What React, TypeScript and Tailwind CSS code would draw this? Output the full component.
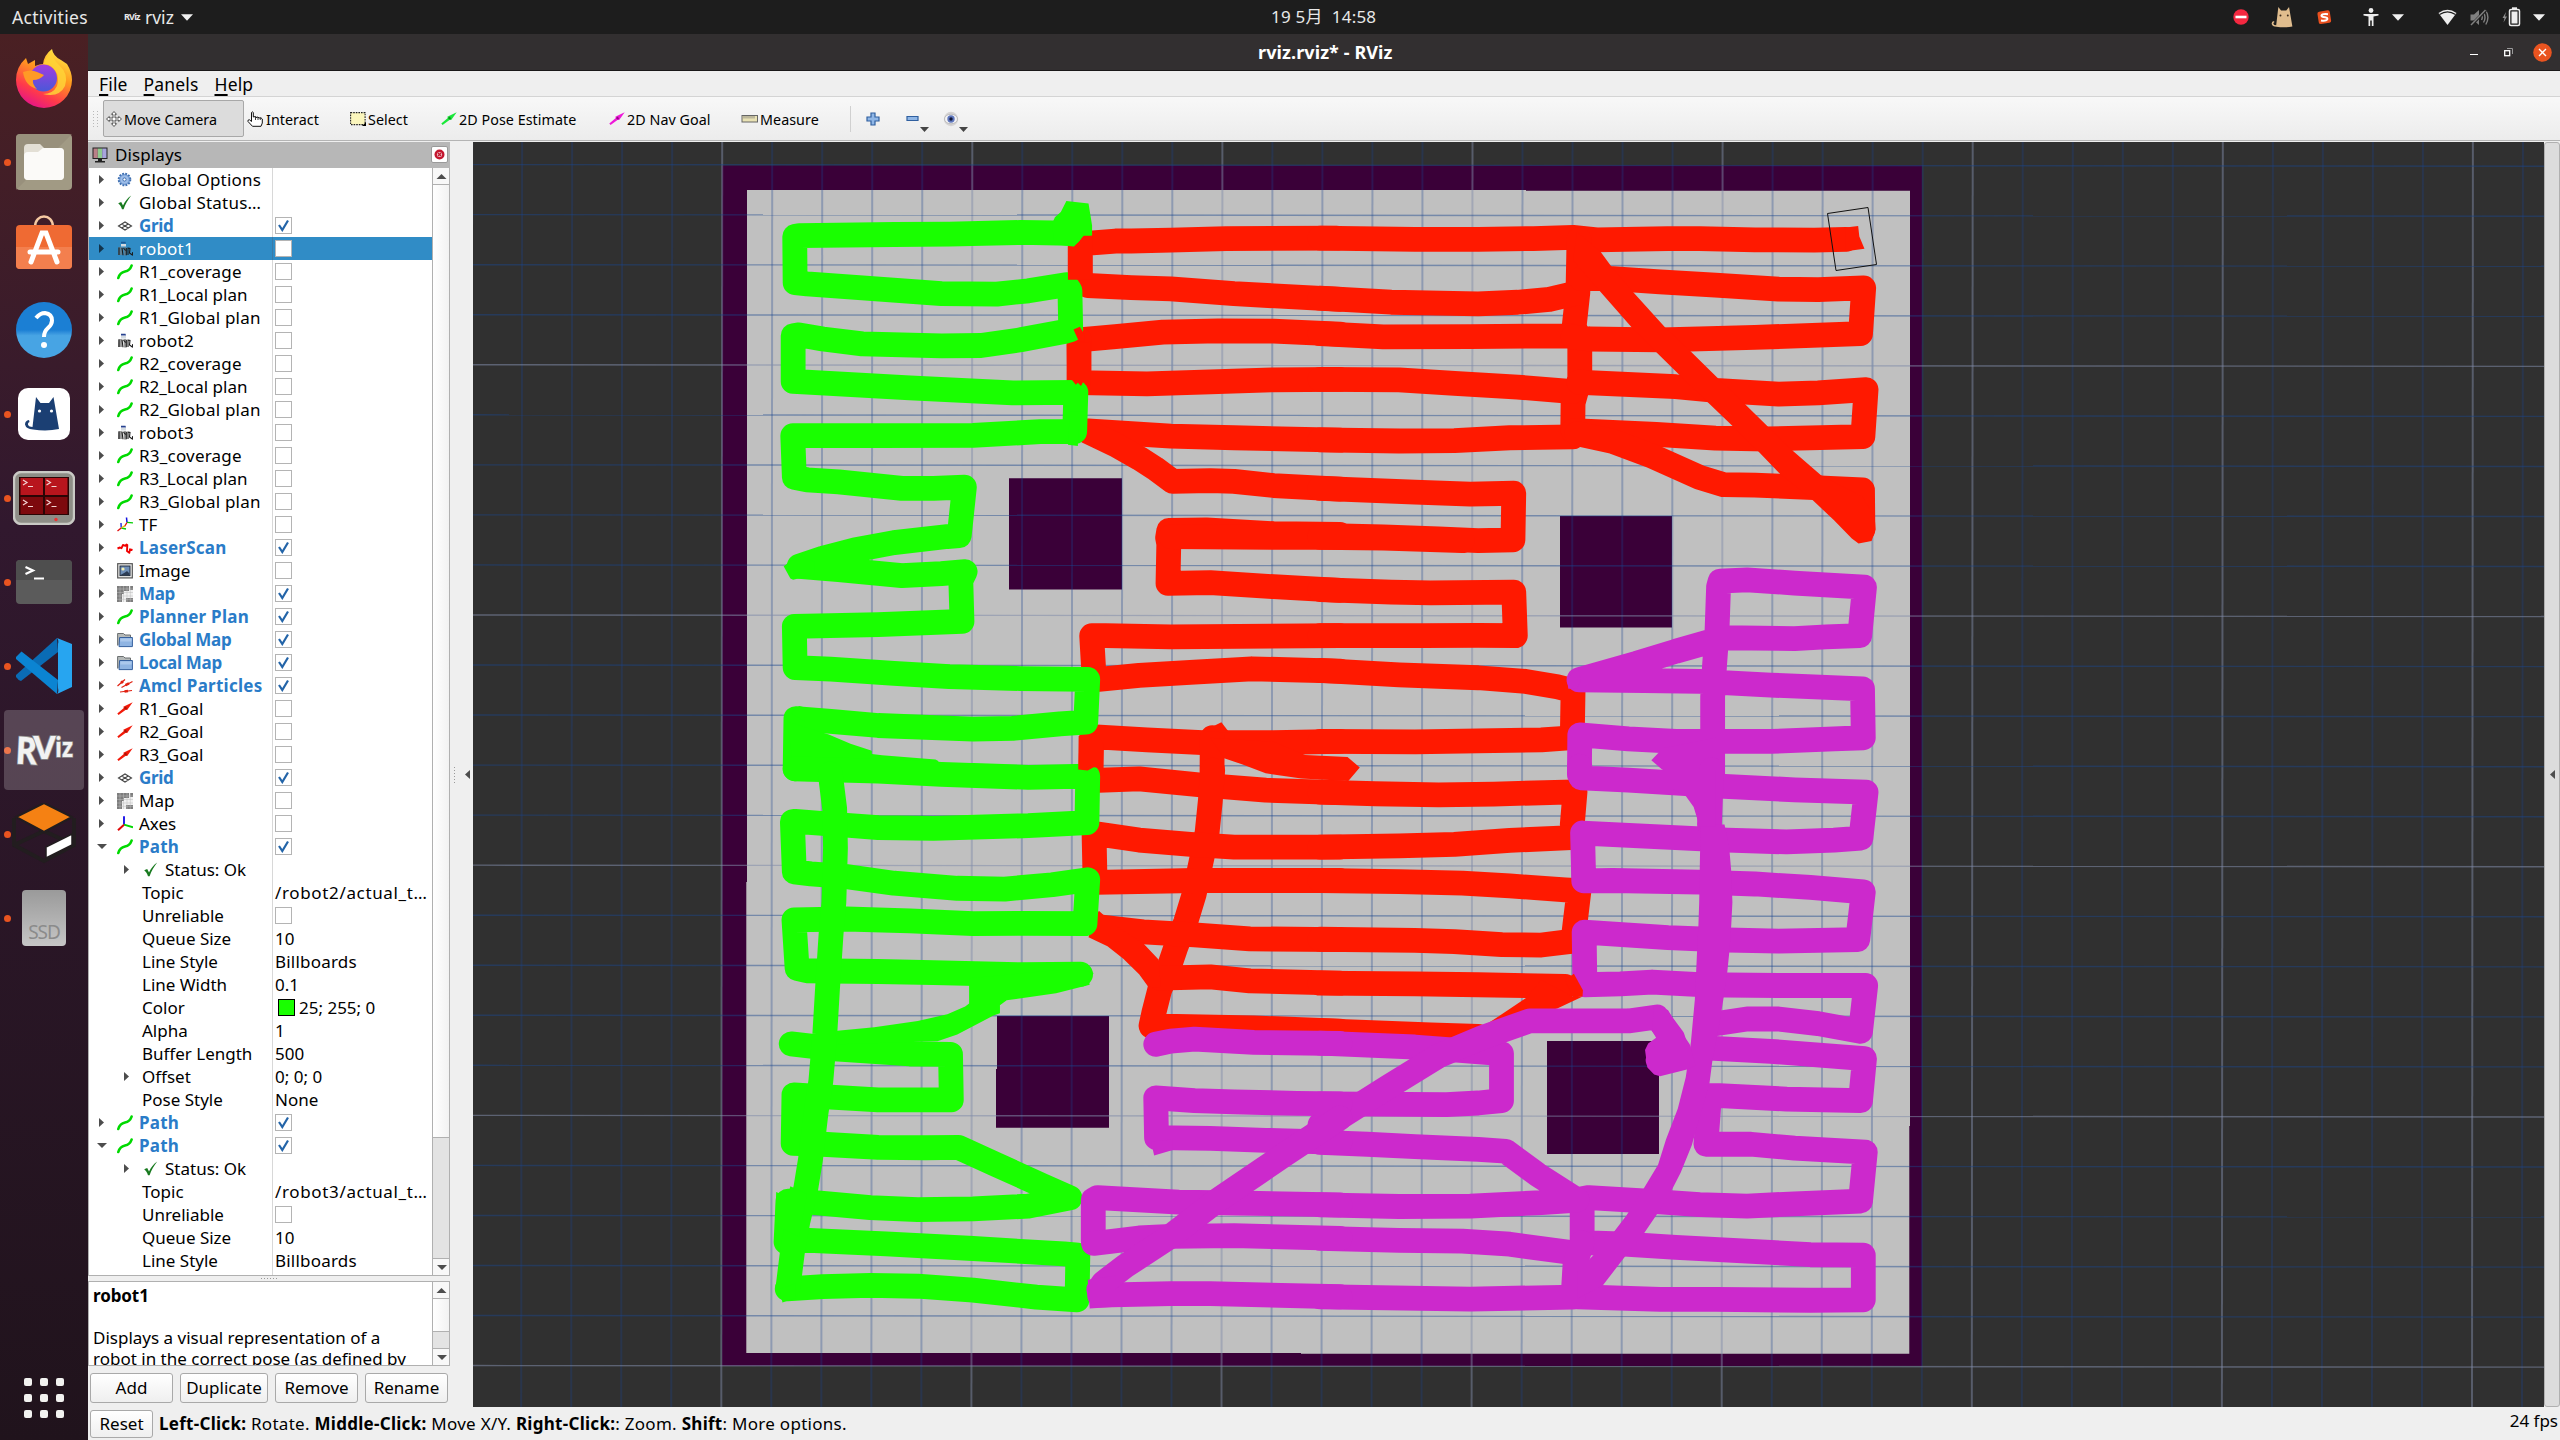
import React from "react";

const FONT = "font-['Noto_Sans','Noto_Sans_CJK_SC',sans-serif]";

/* ---------- small shared glyphs ---------- */

function Caret({ className = "text-[#4d4d4d]", dir = "right" }: { className?: string; dir?: "right" | "down" | "up" | "left" }) {
  const d = {
    right: "M3 1 L8 5.5 L3 10Z",
    down: "M1 3 H11 L6 8Z",
    up: "M0.5 8 H10.5 L5.5 3Z",
    left: "M7 1 L2 5.5 L7 10Z",
  }[dir];
  return (
    <svg width="11" height="11" viewBox="0 0 11 11" className={className}>
      <path d={d} fill="currentColor" />
    </svg>
  );
}

function TreeIcon({ name, selected }: { name: string; selected?: boolean }) {
  const p = { width: 16, height: 16, viewBox: "0 0 16 16", className: "shrink-0" };
  switch (name) {
    case "gear":
      return (
        <svg {...p}>
          <circle cx="7.5" cy="7.5" r="5.8" fill="#8db2e3" stroke="#3f6fb0" strokeWidth="2" strokeDasharray="1.8 1.24" />
          <circle cx="7.5" cy="7.5" r="4.6" fill="#9dbde8" stroke="#6f97cf" strokeWidth="0.8" />
          <circle cx="7.5" cy="7.5" r="1.6" fill="#fff" stroke="#3f6fb0" strokeWidth="1" />
        </svg>
      );
    case "ok":
      return (
        <svg {...p}>
          <path d="M1.2 8.3 L4.2 7 L6 10.5 C8 6.5 10.5 3.2 14.2 0.6 C11 5 8.3 9.3 6.6 14.2 H5 C4.1 11.5 3 9.8 1.2 8.3Z" fill="#187a1f" />
        </svg>
      );
    case "grid":
      return (
        <svg {...p}>
          <path d="M1.5 8 L8 4 L14.5 8 L8 12Z M4.7 6 L11.2 10 M11.2 6 L4.7 10" fill="none" stroke="#444" strokeWidth="1.1" />
        </svg>
      );
    case "robot":
      return (
        <svg {...p}>
          <path d="M4 0.8 H8.5 L9 2.5 H4Z" fill={selected ? "#1c5a96" : "#26418f"} />
          <path d="M4 3 H9 V5.5 H4Z" fill="#d5dbe0" />
          <path d="M1.5 6 H5.5 V14 H1Z M6.5 6 H9.5 L9 14.5 H7Z" fill={selected ? "#5c7f96" : "#9a9a9a"} />
          <path d="M2 6.5 V14 M5 7 L6 14.3 M9.3 7 V14.3 M6.5 7 L8.5 9.5 M11 6.5 V14 M11 7 L13 7.5 L12.5 12 L15.3 14 L15.8 11" fill="none" stroke="#1a1a1a" strokeWidth="1.1" />
        </svg>
      );
    case "path":
      return (
        <svg {...p}>
          <path d="M1.3 14 C2.6 9.6 4.6 8.3 8 7.6 C12 6.8 13.4 5 14.6 1.6" fill="none" stroke="#00d900" strokeWidth="2.6" strokeLinecap="round" />
        </svg>
      );
    case "tf":
      return (
        <svg {...p}>
          <path d="M4.2 10.5 L4 6" stroke="#1010e0" strokeWidth="1.3" />
          <path d="M10 5.5 L9.5 0.5" stroke="#1010e0" strokeWidth="1.5" />
          <path d="M10 5.3 L16 5.8 M4.5 11 L9 12" stroke="#00d000" strokeWidth="1.3" />
          <path d="M0.5 14 L4.5 10.8 M7.5 9.5 L10 5.5" stroke="#e01010" strokeWidth="1.4" />
          <path d="M4.5 10.8 L8 8.6" stroke="#e8c000" strokeWidth="1.2" />
        </svg>
      );
    case "laser":
      return (
        <svg {...p}>
          <path d="M0.5 8.5 L3 7.5 L4.5 8.2 L6 5 L8.5 5.8 L9.5 4.5 L10.3 5 L10 11 L12.3 12.8 L13 9.3 L15.5 10" fill="none" stroke="#f00000" strokeWidth="1.9" strokeLinejoin="round" />
        </svg>
      );
    case "image":
      return (
        <svg {...p}>
          <rect x="0.7" y="0.7" width="14.6" height="14.2" fill="#f2f2f0" stroke="#555" strokeWidth="1.2" />
          <rect x="3" y="3" width="10" height="9.6" fill="#6f8fb8" stroke="#222c3c" />
          <circle cx="6" cy="6" r="1.6" fill="#f6f0b0" />
          <path d="M3.5 12 L8 9.5 L10 8 L12.5 10.5 V12Z" fill="#2c3c55" />
        </svg>
      );
    case "map":
      return (
        <svg {...p}>
          <rect width="16" height="16" fill="#f1f1f1" />
          <path d="M0 0 H12 V5 H7 V8 H5 V16 H0Z M13 0 H16 V4 H13Z M9 12 H16 V16 H9Z" fill="#7d7d7d" />
          <path d="M3 0 V16 M6.5 0 V16 M10 0 V16 M13.3 0 V16 M0 3 H16 M0 6.5 H16 M0 10 H16 M0 13.3 H16" stroke="#bdbdbd" strokeWidth="0.5" />
        </svg>
      );
    case "folder":
      return (
        <svg {...p}>
          <path d="M0.6 13.5 V1.5 H6.5 L8 3 H13.5 V6" fill="#b5b9b8" stroke="#6b6f70" />
          <path d="M2.6 5.5 H15.4 V14.6 H2Z" fill="#8fb4e2" stroke="#35609e" />
          <path d="M3.4 6.5 H14.6 V9.5 H3.2Z" fill="#abc8ec" />
        </svg>
      );
    case "amcl":
      return (
        <svg {...p}>
          <g stroke="#e02010" strokeWidth="1.2">
            <path d="M0.5 8 L8 1.5 M4.5 9.5 L15.5 3.5 M3 14 L15 12.5" />
            <path d="M4 5 L6 3.2 M8.5 7.2 L12 5.4 M7.5 13.5 L11 13" strokeWidth="2.6" />
          </g>
        </svg>
      );
    case "goal":
      return <ArrowIcon color="#f21a0a" dark="#a81408" />;
    case "axes":
      return (
        <svg {...p}>
          <path d="M7 8.7 V0.3" stroke="#1a12e8" strokeWidth="1.9" />
          <path d="M7 8.7 L16 11.3" stroke="#00d800" strokeWidth="1.9" />
          <path d="M7 8.7 L1 14.3" stroke="#e00808" strokeWidth="2" />
        </svg>
      );
    default:
      return null;
  }
}

function ArrowIcon({ color, dark }: { color: string; dark: string }) {
  return (
    <svg width="16" height="16" viewBox="0 0 16 16" className="shrink-0">
      <path d="M0.3 12.4 L6.8 7 L6.3 5.8 L15.7 1.2 L10.2 9 L8.8 8.8 L1.6 14Z" fill={color} />
      <path d="M6.8 7 L9 5.5 L10 8 L8.8 8.8Z" fill={dark} />
    </svg>
  );
}

/* ---------- displays tree ---------- */

type Row = { t: string; icon?: string; on?: boolean; off?: boolean; v?: string; lvl?: number; open?: boolean; leaf?: boolean; sel?: boolean; sw?: boolean; wide?: boolean };

const trio = (n: number): Row[] => [
  { t: `robot${n}`, icon: "robot", off: true, sel: n === 1, wide: true },
  { t: `R${n}_coverage`, icon: "path", off: true, wide: true },
  { t: `R${n}_Local plan`, icon: "path", off: true },
  { t: `R${n}_Global plan`, icon: "path", off: true, wide: true },
];

const prop = (t: string, v: string): Row => ({ t, v, lvl: 1, leaf: true });

const ROWS: Row[] = [
  { t: "Global Options", icon: "gear", wide: true },
  { t: "Global Status…", icon: "ok", wide: true },
  { t: "Grid", icon: "grid", on: true },
  ...trio(1),
  ...trio(2),
  ...trio(3),
  { t: "TF", icon: "tf", off: true },
  { t: "LaserScan", icon: "laser", on: true, wide: true },
  { t: "Image", icon: "image", off: true },
  { t: "Map", icon: "map", on: true },
  { t: "Planner Plan", icon: "path", on: true, wide: true },
  { t: "Global Map", icon: "folder", on: true },
  { t: "Local Map", icon: "folder", on: true },
  { t: "Amcl Particles", icon: "amcl", on: true, wide: true },
  { t: "R1_Goal", icon: "goal", off: true },
  { t: "R2_Goal", icon: "goal", off: true },
  { t: "R3_Goal", icon: "goal", off: true },
  { t: "Grid", icon: "grid", on: true },
  { t: "Map", icon: "map", off: true },
  { t: "Axes", icon: "axes", off: true },
  { t: "Path", icon: "path", on: true, open: true, wide: true },
  { t: "Status: Ok", icon: "ok", lvl: 1 },
  prop("Topic", "/robot2/actual_t…"),
  { t: "Unreliable", off: true, lvl: 1, leaf: true },
  prop("Queue Size", "10"),
  prop("Line Style", "Billboards"),
  prop("Line Width", "0.1"),
  { t: "Color", v: "25; 255; 0", sw: true, lvl: 1, leaf: true },
  prop("Alpha", "1"),
  prop("Buffer Length", "500"),
  { t: "Offset", v: "0; 0; 0", lvl: 1 },
  prop("Pose Style", "None"),
  { t: "Path", icon: "path", on: true, wide: true },
  { t: "Path", icon: "path", on: true, open: true, wide: true },
  { t: "Status: Ok", icon: "ok", lvl: 1 },
  prop("Topic", "/robot3/actual_t…"),
  { t: "Unreliable", off: true, lvl: 1, leaf: true },
  prop("Queue Size", "10"),
  prop("Line Style", "Billboards"),
];

function labelStyle(r: Row) {
  if (r.on) return r.wide ? "font-bold tracking-[0.25px] text-[#2a7cc8]" : "font-bold tracking-[-0.3px] text-[#2a7cc8]";
  return r.wide ? "tracking-[0.22px]" : "";
}

function Check({ on }: { on?: boolean }) {
  return (
    <span className="flex size-[17px] shrink-0 items-center justify-center border border-[#b4b4b4] bg-white">
      {on && (
        <svg width="13" height="13" viewBox="0 0 13 13">
          <path d="M2 6 L5.3 11 L11 1.5" fill="none" stroke="#2364a8" strokeWidth="2.2" />
        </svg>
      )}
    </span>
  );
}

function TreeRow({ r }: { r: Row }) {
  return (
    <div className={`flex h-[23px] shrink-0 items-center ${r.sel ? "bg-[#308cc6] text-white" : "text-black"}`}>
      <div className={`flex h-full w-[184px] shrink-0 items-center overflow-hidden whitespace-nowrap border-r ${r.sel ? "border-[#3a7ba8]" : "border-[#d8d8d8]"} ${r.lvl ? "pl-[32px]" : "pl-[7px]"}`}>
        <span className="flex w-[11px] shrink-0">{!r.leaf && <Caret dir={r.open ? "down" : "right"} className={r.sel ? "text-[#12344c]" : "text-[#4d4d4d]"} />}</span>
        {r.icon && (
          <span className={r.lvl ? "ml-[11px] flex" : "ml-[10px] flex"}>
            <TreeIcon name={r.icon} selected={r.sel} />
          </span>
        )}
        <span className={`leading-[22px] ${r.icon ? "ml-[6px]" : "ml-[10px]"} ${labelStyle(r)}`}>{r.t}</span>
      </div>
      <div className="flex items-center whitespace-nowrap pl-[2px]">
        {(r.on || r.off) && <Check on={r.on} />}
        {r.sw && <span className="ml-[3px] mr-1 size-[17px] border border-black bg-[#19ff00]" />}
        {r.v && <span className={`leading-[22px] ${r.v.startsWith("/") ? "tracking-[0.65px]" : r.v === "Billboards" ? "tracking-[0.2px]" : ""}`}>{r.v}</span>}
      </div>
    </div>
  );
}

function ScrollBar({ thumb }: { thumb: string }) {
  return (
    <div className="flex w-[17px] shrink-0 flex-col border-l border-[#b0b0b0] bg-[#e3e3e3]">
      <div className="flex h-[17px] shrink-0 items-center justify-center border-b border-[#b0b0b0] bg-[#f8f8f8]"><Caret dir="up" /></div>
      <div className={`${thumb} shrink-0 border-b border-[#b0b0b0] bg-gradient-to-r from-white to-[#f2f2f2]`} />
      <div className="flex-1" />
      <div className="flex h-[17px] shrink-0 items-center justify-center border-t border-[#b0b0b0] bg-[#f8f8f8]"><Caret dir="down" /></div>
    </div>
  );
}

function Btn({ children, className }: { children: React.ReactNode; className: string }) {
  return (
    <div className={`flex items-center justify-center rounded-[3px] border border-[#a9a9a9] bg-gradient-to-b from-white to-[#efefef] ${className}`}>{children}</div>
  );
}

function DisplaysPanel() {
  return (
    <div className="flex w-[362px] shrink-0 flex-col">
      <div className="flex h-[26px] items-center bg-[#b7b7b7] pl-[4px] pr-[2px]">
        <svg width="16" height="16" viewBox="0 0 16 16">
          <rect x="0.5" y="0.5" width="15" height="11.5" fill="#222" />
          <path d="M1.5 1.5 H5.8 V11 H1.5Z" fill="#b98088" />
          <path d="M5.8 1.5 H10.2 V11 H5.8Z" fill="#8fca8f" />
          <path d="M10.2 1.5 H14.5 V11 H10.2Z" fill="#a7a4dc" />
          <path d="M6 12 H10 V14 H13 V15.5 H3 V14 H6Z" fill="#222" />
        </svg>
        <span className="-mt-px ml-[7px] flex-1 tracking-[0.1px]">Displays</span>
        <span className="-mt-[2px] flex size-[17px] items-center justify-center rounded-[2px] border border-[#9a9a9a] bg-white">
          <svg width="11" height="11" viewBox="0 0 11 11">
            <circle cx="5.5" cy="5.5" r="5" fill="#c4162f" />
            <circle cx="5.5" cy="5.5" r="2.6" fill="#e9b7bd" />
            <path d="M4 4 L7 7 M7 4 L4 7" stroke="#c4162f" strokeWidth="1.2" />
          </svg>
        </span>
      </div>
      <div className="flex h-[1108px] border-b border-l border-r border-[#b0b0b0] bg-white">
        <div className="flex h-[1107px] flex-1 flex-col overflow-hidden">
          {ROWS.map((r, i) => (
            <TreeRow key={i} r={r} />
          ))}
          <div className="w-[184px] flex-1 border-r border-[#d8d8d8]" />
        </div>
        <ScrollBar thumb="h-[953px]" />
      </div>
      <div className="flex h-[5px] items-center justify-center gap-[2px]">
        {[0, 1, 2, 3, 4, 5].map((i) => (
          <span key={i} className="size-px bg-[#999]" />
        ))}
      </div>
      <div className="flex h-[85px] border border-[#b0b0b0] bg-white">
        <div className="h-[83px] flex-1 overflow-hidden whitespace-nowrap pl-[4px] pt-[3px] leading-[21px]">
          <p className="font-bold tracking-[-0.1px]">robot1</p>
          <p className="mt-[21px]">Displays a visual representation of a</p>
          <p>robot in the correct pose (as defined by</p>
        </div>
        <ScrollBar thumb="h-[33px]" />
      </div>
      <div className="mt-[7px] flex h-[30px] pl-[2px]">
        <Btn className="w-[83px]">Add</Btn>
        <Btn className="ml-[7px] w-[88px]">Duplicate</Btn>
        <Btn className="ml-[7px] w-[83px]">Remove</Btn>
        <Btn className="ml-[7px] w-[83px]">Rename</Btn>
      </div>
    </div>
  );
}

/* ---------- 3D view ---------- */

const TOP_L = "translate(720 150) scale(0.39541 0.40816)";
const TOP_R = "translate(1320 150) scale(0.39541 0.40816)";
const BOT_L = "translate(720 770) scale(0.39541 0.38903)";
const BOT_R = "translate(1320 770) scale(0.39541 0.38903)";

function Trail({ at, color, lines, areas = [] }: { at: string; color: string; lines: string[]; areas?: string[] }) {
  return (
    <g transform={at}>
      {lines.map((pts, i) => (
        <polyline key={i} points={pts} fill="none" stroke={color} strokeWidth="24.8" strokeLinejoin="round" strokeLinecap="round" vectorEffect="non-scaling-stroke" />
      ))}
      {areas.map((pts, i) => (
        <polygon key={i} points={pts} fill={color} />
      ))}
    </g>
  );
}

const RED = "#ff1900";
const GREEN = "#19ff00";
const PURPLE = "#cc29cc";

function View3D() {
  const ks = Array.from({ length: 50 }, (_, i) => i);
  return (
    <svg width="2071" height="1265" viewBox="473 142 2071 1265" className="block shrink-0 bg-[#303030]">
      <path d="M722 165.5 H1922 V1366 H722Z" fill="#3a0038" />
      <path d="M747 190 H1526 V190.7 H1910 V1126 H1909.3 V1353.7 H1301 V1353 H746.3 V882 H747Z" fill="#c0c0c0" />
      <path d="M1009 478.2 H1122 V589.6 H1009Z M1560 516 H1672 V627.5 H1560Z M997 1016 H1109 V1127.7 H996 V1069 H997Z M1547 1041 H1659 V1154 H1547Z" fill="#3a0038" />

      {ks.map((k) => {
        const x = 472.1 + 50.02 * k;
        return x < 2544 ? <line key={k} x1={x} x2={x - 0.9} y1="142" y2="1407" stroke={k % 5 === 0 ? "rgba(130,140,170,0.48)" : "rgba(26,67,141,0.3)"} strokeWidth="2" /> : null;
      })}
      {ks.slice(0, 25).map((k) => {
        const y = 164.6 + 50.04 * k;
        return <line key={k} x1="473" x2="2544" y1={y} y2={y + 1.6} stroke={k % 5 === 4 ? "rgba(130,140,170,0.55)" : "rgba(26,72,141,0.45)"} strokeWidth="1.4" />;
      })}

      <Trail
        at={TOP_L}
        color={RED}
        lines={[
          "911,325 911,230 1000,223 1040,223 1140,221 1280,217 1560,216",
          "930,332 1040,337 1140,340 1300,352 1568,366",
          "908,465 1000,457 1120,446 1260,443 1400,444 1568,451",
          "908,463 908,570 1080,573 1240,568 1400,563 1568,562",
          "930,688 1040,695 1140,701 1300,705 1568,711",
          "930,690 1000,722 1060,755 1100,780 1145,812 1240,810 1300,812 1400,822 1568,831",
          "1568,942 1400,940 1230,931 1135,932 1132,950 1135,965 1133,1062 1240,1060 1400,1070 1568,1079",
          "1140,947 1400,949 1568,949",
          "1568,1190 1140,1193 975,1190 940,1190 946,1290",
          "945,1298 1060,1287 1200,1279 1345,1271 1568,1277",
          "1568,1449 1400,1452 1220,1452 1080,1445 940,1437 938,1540",
          "1245,1440 1244,1568",
        ]}
        areas={[
          "1222,1424 1268,1402 1288,1427",
          "1240,1440 1400,1450 1480,1482 1587,1487 1618,1513 1589,1546 1470,1540 1380,1527 1320,1505 1275,1490",
        ]}
      />
      <Trail
        at={TOP_R}
        color={RED}
        lines={[
          "0,216 240,219 400,219 540,217 640,214 700,220 880,217 960,217 1100,220 1250,221 1330,219",
          "655,220 653,320 652,350 643,430 657,480 657,560 640,620 639,702",
          "0,363 180,373 400,377 500,373 580,366 650,350",
          "0,450 160,458 380,457 560,456 640,456",
          "0,562 200,563 340,572 500,581 640,592",
          "0,710 200,713 340,712 480,705 640,703",
          "660,315 740,315 860,323 1000,331 1160,341 1260,342 1375,338 1367,450 1280,453 1100,459 960,463 860,465 680,463 640,458",
          "655,569 900,580 1000,589 1160,598 1260,595 1381,587 1373,702 1130,708 1000,706 850,697 670,689 640,688",
          "650,695 740,714 840,750 960,802 1020,820 1100,821 1250,827 1372,833 1373,930",
          "0,829 240,838 380,843 490,841 488,955 400,957 300,953 160,948 0,944",
          "0,949 160,951 360,957",
          "0,1077 180,1083 280,1085 490,1083 494,1190 400,1189 260,1190 0,1190",
          "0,1275 200,1286 400,1293 520,1302 600,1315 640,1325 638,1440 560,1445 440,1447 240,1450 0,1449",
        ]}
        areas={[
          "1330,190 1361,186 1364,212 1377,242 1330,248",
          "710,250 735,283 790,346 873,435 937,493 1007,560 1077,625 1133,678 1197,738 1267,797 1373,850 1403,900 1405,930 1395,958 1362,964 1345,952 1300,907 1245,857 1163,793 1107,737 1042,675 982,619 908,550 850,495 788,434 708,346 640,270 650,200",
        ]}
      />
      <Trail
        at={BOT_L}
        color={RED}
        lines={[
          "940,27 1060,23 1210,38 1380,52 1568,58",
          "1246,0 1240,80 1232,160 1219,225 1199,320 1178,390 1153,455 1138,500 1112,565 1097,625 1090,658 1350,663 1568,671",
          "1568,198 1300,198 1190,191 1060,180 960,165 946,165 948,260",
          "950,289 1200,284 1568,284",
          "965,404 1070,416 1200,424 1340,434 1568,436",
          "1112,535 1240,532 1340,542 1568,548",
        ]}
        areas={["932,430 980,453 1020,485 1060,525 1083,557 1115,560 1109,487 1072,447 1000,400 958,362 940,400"]}
      />
      <Trail
        at={BOT_R}
        color={RED}
        lines={[
          "0,57 140,61 300,64 440,62 645,56 638,140",
          "0,198 200,195 340,191 480,181 635,174",
          "0,284 200,287 360,291 480,298 620,308 655,310 642,420",
          "0,435 240,438 340,441 460,449 560,450 640,440",
          "0,548 240,550 400,552 620,556",
          "0,670 280,681 400,685",
        ]}
        areas={["520,587 560,540 640,583 663,583 600,613 500,640 340,690 427,650"]}
      />

      <Trail
        at={TOP_L}
        color={GREEN}
        lines={[
          "885,204 760,202 580,206 440,207 200,210 189,212 190,325 220,328 360,338 560,352 700,353 780,345 875,330 885,345 887,440 870,445 760,465 660,479 560,480 360,475 260,463 200,453 185,455 185,567 220,569 480,583 740,595 900,594 897,690 810,690 640,699 400,700 200,700 184,700 188,802 220,808 300,813 460,829 540,829 618,826 605,945 575,947 440,962 340,980 260,1000 200,1020 300,1028 460,1043 560,1038 620,1033 609,1055 612,1155 400,1163 188,1167 190,1268 280,1272 440,1282 580,1290 760,1295 930,1297 925,1402 860,1406 740,1417 640,1419 400,1410 280,1400 192,1393 190,1516",
        ]}
        areas={[
          "876,125 932,131 936,155 941,185 941,210 920,210 895,237 845,230 840,180 847,165 862,152",
          "170,1400 275,1432 330,1455 384,1472 384,1480 410,1483 545,1493 552,1497 560,1550 190,1546",
          "161,1020 200,992 240,1010 240,1040 185,1053 178,1050",
          "180,1380 200,1362 215,1366 215,1400",
          "885,640 927,640 927,683 907,684 905,725 880,722",
        ]}
      />
      <Trail
        at={BOT_L}
        color={GREEN}
        lines={[
          "190,-3 400,3 560,11 780,19 930,16 928,135 780,143 540,150 400,148 320,142 190,132 183,133 188,262 230,267 320,274 440,291 600,304 720,306 840,295 930,282 923,395 760,394 640,395 480,388 320,383 187,385 195,510 220,516 400,518 540,521 760,526 912,525",
          "180,704 290,717 480,730 583,731 585,848 400,848 280,841 187,835 185,960 260,962 400,970 520,971 603,970 700,1015 815,1068 885,1100 780,1121 640,1128 500,1130 380,1125 240,1112 172,1108 167,1213 225,1209 420,1218 640,1230 870,1244 905,1247 903,1362 800,1355 640,1337 500,1327 380,1325 260,1328 170,1334",
          "279,10 290,100 292,200 288,340 281,420 272,560 265,680 255,800 243,880 229,1000 217,1075 197,1160 183,1240 172,1330",
        ]}
        areas={[
          "630,535 630,600 620,608 575,628 500,645 390,661 290,671 300,705 550,697 600,680 690,632 708,625 708,605 725,592 850,574 935,552 932,540 945,522 900,510",
          "142,1085 170,1097 178,1070 220,1090 200,1200 140,1170",
          "150,1335 158,1369 190,1358 190,1320",
        ]}
      />

      <Trail
        at={TOP_R}
        color={PURPLE}
        lines={[
          "993,1568 993,1340 998,1260 1004,1180 1008,1070 1012,1056 1080,1053 1200,1061 1377,1071 1365,1190 1280,1193 1200,1197 1020,1195 900,1228 800,1258 655,1298 820,1300 960,1302 1140,1311 1372,1320 1374,1440 1300,1443 1140,1449 900,1449 780,1443 657,1433 656,1530",
        ]}
        areas={["1000,1440 870,1465 855,1478 838,1495 865,1518 1000,1575", "625,1300 640,1275 652,1270 660,1300 650,1320 628,1320"]}
      />
      <Trail
        at={BOT_R}
        color={PURPLE}
        lines={[
          "657,-10 660,20 780,26 925,35 1023,42 1200,51 1381,57 1368,175 1300,180 1180,185 1030,180 820,170 664,162 667,285 740,284 960,288 1100,293 1240,302 1374,313 1360,436 1160,440 1030,437 880,431 668,417 670,552 760,550 840,545 960,552 1160,554 1380,554 1367,672 1260,652 1160,640 1080,640 1000,652",
          "985,715 1140,723 1377,742 1367,850 1180,846 1010,837 985,837 976,962 1090,962 1200,972 1379,982 1367,1108 1200,1115 1080,1121 960,1117 840,1109 680,1099 663,1102 663,1215 760,1218 900,1227 1140,1240 1240,1246 1374,1247 1374,1362 1240,1363 1000,1361 860,1361 650,1354",
          "990,0 985,140",
          "0,702 240,712 459,729 459,850 400,856 320,860 120,859 0,858",
          "0,957 120,962 240,968 400,975 470,980 550,1040 650,1105 635,1107 560,1112 380,1121 200,1122 0,1118",
          "0,1204 200,1209 360,1211 480,1219 640,1241",
          "0,1354 380,1360 640,1355 645,1270 663,1215",
          "0,912 50,893 170,816 300,735 410,688 530,645 780,645 852,635 892,690 905,735 855,745",
        ]}
        areas={[
          "963,140 961,220 959,340 957,400 953,480 948,590 938,700 925,790 905,870 875,950 855,1015 816,1080 775,1145 745,1185 692,1247 650,1290 650,1360 715,1325 772,1250 820,1190 850,1145 888,1083 912,1035 940,965 985,805 992,750 1012,640 1020,590 1030,520 1035,470 1040,400 1043,340 1040,260 1035,200 1023,140",
          "850,0 895,50 925,67 945,95 960,145 1000,145 1000,0",
          "845,605 880,617 905,660 935,705 950,760 928,770 860,787 845,783 828,765 822,720 830,703 850,688 840,670",
        ]}
      />
      <Trail
        at={BOT_L}
        color={PURPLE}
        lines={[
          "1102,705 1140,697 1200,692 1350,700 1568,703",
          "1568,858 1460,857 1300,853 1200,850 1102,843 1104,945 1240,947 1380,952 1568,957",
          "944,1210 944,1105 955,1099 1160,1111 1300,1113 1568,1118",
          "945,1217 1060,1203 1140,1199 1300,1197 1568,1204",
          "960,1350 1140,1346 1240,1346 1568,1354",
          "958,1335 970,1318 1025,1275 1140,1198 1250,1112 1430,987 1568,894",
        ]}
        areas={["930,1310 935,1384 1000,1380 1000,1300", "1090,955 1098,991 1145,977 1145,950"]}
      />
      <g transform={BOT_R}>
        <polygon points="642,524 665,566 664,582 640,585 620,540" fill={RED} />
      </g>
      <g transform={TOP_L} fill={RED}>
        <polygon points="894,440 910,433 922,452 921,470 908,470" />
        <polygon points="880,237 897,237 920,212 942,210 942,318 880,318" />
        <polygon points="877,476 938,470 938,578 929,568 926,577 919,567 913,578 905,570 900,575 889,562 878,560" />
        <polygon points="907,1436 955,1430 969,1455 969,1515 945,1512 930,1520 906,1518" />
      </g>
      <path d="M1827.5 213.5 L1868 207.5 L1876.5 264.5 L1836 270.5Z" fill="none" stroke="#111" strokeWidth="1" />
    </svg>
  );
}

/* ---------- dock ---------- */

function DockSlot({ dot, active, children }: { dot?: boolean; active?: boolean; children: React.ReactNode }) {
  return (
    <div className="flex h-[84px] items-center">
      <span className={`ml-[4px] h-[7px] w-[7px] rounded-full ${dot ? "bg-[#e95420]" : "bg-transparent"}`} />
      <div className="-ml-[11px] flex h-[80px] w-[88px] items-center justify-center">
        <div className={`flex size-[80px] items-center justify-center rounded-[4px] ${active ? "bg-white/20" : ""}`}>{children}</div>
      </div>
    </div>
  );
}

function CatShape({ fill, eye }: { fill: string; eye: string }) {
  return (
    <>
      <path d="M18 9 L22.5 15 H31 L35.5 9 L41 41 Q29 43.5 15 41.5 Q8 41 7 36.5 Q7 32.5 11 32 L11.5 34 Q9.5 34.5 10 37 Q11 39 14.5 39Z" fill={fill} />
      <circle cx="21.5" cy="23" r="1.6" fill={eye} />
      <circle cx="33.5" cy="23" r="1.6" fill={eye} />
    </>
  );
}

function Dock() {
  return (
    <div className="flex w-[88px] shrink-0 flex-col bg-gradient-to-b from-[#4a2023] via-[#31182e] via-35% to-[#20131c] pt-[2px]">
      <DockSlot>
        <svg width="58" height="60" viewBox="0 0 58 60">
          <defs>
            <linearGradient id="ff1" x1="0.8" y1="0" x2="0.3" y2="1">
              <stop offset="0" stopColor="#fff04a" />
              <stop offset="0.4" stopColor="#ff9a1e" />
              <stop offset="0.75" stopColor="#ff3a4a" />
              <stop offset="1" stopColor="#e3138b" />
            </linearGradient>
            <linearGradient id="ff2" x1="0.5" y1="0" x2="0.5" y2="1">
              <stop offset="0" stopColor="#a33be0" />
              <stop offset="1" stopColor="#4a58d8" />
            </linearGradient>
          </defs>
          <path d="M11 10 L13 16 L20 12 L20 18 Q25 16 28 16 Q29 7 37 1 Q38 8 46 12 L52 16 Q57 24 57 32 A28 28 0 0 1 1 32 Q1 19 11 10Z" fill="url(#ff1)" />
          <circle cx="28.5" cy="30" r="13.5" fill="url(#ff2)" />
          <path d="M8 24 Q16 21 22 24 L29 27 Q25 32 18 32 Q17 36 22 41 Q10 38 8 24Z" fill="#ff9a26" />
          <path d="M34 17 Q46 24 42 38 Q38 46 28 46 Q44 50 50 38 Q54 26 44 17 Q38 12 37 4 Q30 10 28.5 16Z" fill="#ffd437" opacity="0.85" />
        </svg>
      </DockSlot>
      <DockSlot dot>
        <svg width="56" height="56" viewBox="0 0 56 56">
          <rect width="56" height="56" rx="4" fill="#a19a84" />
          <path d="M56 0 L0 56 V4 Q0 0 4 0Z" fill="#928b76" opacity="0.6" />
          <path d="M8 14 Q8 10 12 10 H24 L28 14 H44 Q48 14 48 18 V42 Q48 46 44 46 H12 Q8 46 8 42Z" fill="#e3dfd5" />
          <path d="M8 22 Q8 18 12 18 H22 L27 14 H44 Q48 14 48 18 V42 Q48 46 44 46 H12 Q8 46 8 42Z" fill="#fbfaf8" />
        </svg>
      </DockSlot>
      <DockSlot>
        <svg width="56" height="54" viewBox="0 0 56 54" className="-mt-[8px]">
          <path d="M19 12 C19 -2 37 -2 37 12" fill="none" stroke="#f5c9a2" strokeWidth="2.4" />
          <rect y="10" width="56" height="44" rx="4" fill="#ef6a33" />
          <path d="M0 32 H56 V50 Q56 54 52 54 H4 Q0 54 0 50Z" fill="#f37f4e" />
          <path d="M15 47 L26 18 H30 L41 47 M14 37 H42" fill="none" stroke="#fff" strokeWidth="5" strokeLinecap="round" />
        </svg>
      </DockSlot>
      <DockSlot>
        <div className="flex size-14 items-center justify-center rounded-full bg-gradient-to-b from-[#1b7fd4] from-50% to-[#47a4e4] to-60%">
          <svg width="24" height="40" viewBox="0 0 24 40">
            <path d="M4 8 Q8 3 13 3 Q20 4 20 10.5 Q20 14.5 16 18 Q12 21.5 12 27" fill="none" stroke="#fff" strokeWidth="4" />
            <circle cx="12" cy="35" r="3" fill="#fff" />
          </svg>
        </div>
      </DockSlot>
      <DockSlot dot>
        <div className="flex size-[52px] items-center justify-center rounded-[10px] bg-white">
          <svg width="52" height="52" viewBox="0 0 52 52">
            <CatShape fill="#1b3f73" eye="#fff" />
          </svg>
        </div>
      </DockSlot>
      <DockSlot dot>
        <svg width="62" height="54" viewBox="0 0 62 54">
          <rect x="1" y="1" width="60" height="52" rx="7" fill="#8d8d86" stroke="#c9c9c4" strokeWidth="2.4" />
          <rect x="6" y="6" width="50" height="38" fill="#2a0505" />
          <path d="M7.5 7 H30 V24 H7.5Z M32 7 H54.5 V24 H32Z" fill="#b8151d" />
          <path d="M7.5 26 H30 V43 H7.5Z M32 26 H54.5 V43 H32Z" fill="#7d090d" />
          <path d="M10 9 l4 2.5 l-4 2.5 M15 15.5 h5 M33.5 9 l4 2.5 l-4 2.5 M38.5 15.5 h5 M10 29 l4 2.5 l-4 2.5 M15 35.5 h5 M33.5 29 l4 2.5 l-4 2.5 M38.5 35.5 h5" fill="none" stroke="#f3d4d4" strokeWidth="1.2" />
          <circle cx="43" cy="48.5" r="1.7" fill="#e33" />
        </svg>
      </DockSlot>
      <DockSlot dot>
        <svg width="56" height="44" viewBox="0 0 56 44">
          <rect width="56" height="44" rx="4" fill="#5b5b5b" />
          <path d="M0 20 V4 Q0 0 4 0 H52 Q56 0 56 4 V20Z" fill="#4e4e4e" />
          <path d="M9.5 7 L17 10.5 L9.5 14 M18 18.5 H28" fill="none" stroke="#fff" strokeWidth="2.2" />
        </svg>
      </DockSlot>
      <DockSlot dot>
        <svg width="56" height="56" viewBox="0 0 56 56">
          <path d="M0 37 L41 0 L42 14 L5 43 Q2 42 0 39Z" fill="#0a6cb5" />
          <path d="M0 19 L5.5 13.5 L42 42 L41 56 L0 21Z" fill="#0b84d2" />
          <path d="M41 0 L56 6 V49 L41 56 Q43 54 42 50 V6 Q43 2 41 0Z" fill="#27a5f0" />
        </svg>
      </DockSlot>
      <DockSlot dot active>
        <svg width="76" height="76" viewBox="-7 -16 76 76" className="shrink-0 overflow-visible">
          <g fontFamily="Open Sans, sans-serif" fontWeight="700" fill="#f2f2f2" stroke="#8c8c8c" strokeWidth="1.6" paintOrder="stroke">
            <text x="2" y="36" fontSize="38" textLength="22" lengthAdjust="spacingAndGlyphs" transform="rotate(3 10 30)">R</text>
            <text x="20" y="31" fontSize="32" textLength="23" lengthAdjust="spacingAndGlyphs">V</text>
            <text x="42" y="29" fontSize="26" textLength="18" lengthAdjust="spacingAndGlyphs">iz</text>
          </g>
        </svg>
      </DockSlot>
      <DockSlot dot>
        <svg width="64" height="62" viewBox="0 0 64 62">
          <path d="M2 15 V42 L32 58 L62 42 V15 M2 42 L32 28 L62 42" fill="none" stroke="#221d1f" strokeWidth="4" />
          <path d="M32 0 L60 14 L32 29 L4 14Z" fill="#f58113" stroke="#221d1f" strokeWidth="2" />
          <path d="M34 44 L60 31 V42 L34 55Z" fill="#fff" stroke="#221d1f" strokeWidth="1.5" />
        </svg>
      </DockSlot>
      <DockSlot dot>
        <div className="flex h-14 w-11 items-end justify-center rounded-[4px] bg-gradient-to-b from-[#9a9a9a] to-[#c6c6c6] pb-[3px] text-[19px] leading-[22px] tracking-[-1px] text-[#8b8b8b]">SSD</div>
      </DockSlot>
      <div className="flex-1" />
      <div className="mb-[22px] ml-[24px] grid w-[40px] grid-cols-3 gap-[8px]">
        {Array.from({ length: 9 }, (_, i) => (
          <span key={i} className="size-2 rounded-[2px] bg-[#f2f2f0]" />
        ))}
      </div>
    </div>
  );
}

/* ---------- bars ---------- */

function TopCaret() {
  return (
    <svg width="12" height="7" viewBox="0 0 12 7">
      <path d="M0 0.3 H12 L6 6.7Z" fill="#f0f0f0" />
    </svg>
  );
}

function TopBar() {
  return (
    <div className="flex h-[34px] shrink-0 items-center bg-[#1d1d1d] text-[17.5px] text-[#e8e8e8]">
      <span className="w-[124px] pl-[12px] tracking-[0.3px]">Activities</span>
      <span className="w-[21px] text-[9px] font-bold tracking-[-0.8px]">RViz</span>
      <span className="w-[36px]">rviz</span>
      <TopCaret />
      <div className="flex-1" />
      <span className="mr-[856px] flex w-[106px] whitespace-pre text-[17px] tracking-[0.2px]">19 5月  14:58</span>
      <div className="flex w-[327px] items-center">
        <svg width="16" height="16" viewBox="0 0 16 16">
          <circle cx="8" cy="8" r="7.7" fill="#f42840" />
          <rect x="2.5" y="6.7" width="11" height="2.6" fill="#fff" />
        </svg>
        <svg width="22" height="22" viewBox="6 8 36 35" className="ml-[22px]">
          <CatShape fill="#e0bd8e" eye="#3a2a1a" />
        </svg>
        <svg width="15" height="15" viewBox="0 0 15 15" className="ml-[24px]">
          <rect x="1" y="1" width="12.5" height="12.5" rx="2" fill="#e9501f" transform="rotate(-9 7 7)" />
          <path d="M11 4.2 Q5 3.5 4.5 5.6 Q4.6 7 8 7.2 Q11 7.6 10.2 9.5 Q9 11.3 4 10.5" fill="none" stroke="#fff" strokeWidth="2" />
        </svg>
        <svg width="16" height="19" viewBox="0 0 16 19" className="ml-[31px]">
          <circle cx="8" cy="2.5" r="2.4" fill="#eee" />
          <path d="M0.5 6 H15.5 V7.5 L10.5 8.5 V18 H8.8 V12.5 H7.2 V18 H5.5 V8.5 L0.5 7.5Z" fill="#eee" />
        </svg>
        <span className="ml-[13px]"><TopCaret /></span>
        <svg width="19" height="17" viewBox="0 0 19 17" className="ml-[34px]">
          <path d="M0.5 4 Q9.5 -2.5 18.5 4 L9.5 16Z" fill="#eee" />
          <path d="M1.5 5.5 Q9.5 0.2 17.5 5.5" fill="none" stroke="#1d1d1d" strokeWidth="1.2" />
        </svg>
        <svg width="19" height="17" viewBox="0 0 19 17" className="ml-[13px]">
          <path d="M0.5 5.5 H4 L9 1 V16 L4 11.5 H0.5Z" fill="#808080" />
          <path d="M11.5 6 Q13 8.5 11.5 11 M13.5 3.5 Q16.5 8.5 13.5 13.5 M15.8 1.5 Q20 8.5 15.8 15.5" fill="none" stroke="#808080" strokeWidth="1.4" />
          <path d="M1.5 16 L16 1" stroke="#1d1d1d" strokeWidth="3" />
          <path d="M1 16 L15.5 1" stroke="#808080" strokeWidth="1.5" />
        </svg>
        <svg width="19" height="20" viewBox="0 0 19 20" className="ml-[13px]">
          <path d="M4 5 L0.5 11 H2.5 L1.5 15.5 L5 9.5 H3Z" fill="#909090" />
          <rect x="7.5" y="2.5" width="10" height="16" rx="1.5" fill="none" stroke="#eee" strokeWidth="1.5" />
          <rect x="9.5" y="4.5" width="6" height="12" fill="#eee" />
          <rect x="10" y="0.3" width="5" height="2" fill="#eee" />
        </svg>
        <span className="ml-[12px]"><TopCaret /></span>
      </div>
    </div>
  );
}

function TitleBar() {
  return (
    <div className="flex h-[37px] items-center border-b border-[#1a1819] bg-[#322f30]">
      <span className="w-[1170px]" />
      <span className="w-[1212px] whitespace-nowrap text-[18px] font-bold tracking-[0.1px] text-white">rviz.rviz* - RViz</span>
      <span className="mt-[4px] h-px w-[8px] bg-white" />
      <svg width="9" height="9" viewBox="0 0 9 9" className="ml-[26px]">
        <path d="M3 0.5 H8.5 V6" fill="none" stroke="#999" />
        <rect x="0.7" y="2.7" width="5" height="5" fill="none" stroke="#fff" strokeWidth="1.3" />
      </svg>
      <svg width="19" height="19" viewBox="0 0 19 19" className="ml-[20px]">
        <circle cx="9.5" cy="9.5" r="9.3" fill="#e95420" />
        <path d="M6 6 L13 13 M13 6 L6 13" stroke="#fff" strokeWidth="1.4" />
      </svg>
    </div>
  );
}

function Tool({ icon, label, className }: { icon: React.ReactNode; label: string; className: string }) {
  return (
    <div className={`flex h-[37px] shrink-0 items-center whitespace-nowrap ${className}`}>
      {icon}
      <span className="ml-[2px] mt-[2px] tracking-[0.05px]">{label}</span>
    </div>
  );
}

function ToolBar() {
  return (
    <div className="flex h-[44px] items-center border-b border-[#b4b4b4] bg-gradient-to-b from-[#f8f8f8] to-[#ececec] pl-[5px] text-[14.3px]">
      <div className="grid w-[10px] grid-cols-2 gap-x-[1px] gap-y-[2px] pr-[4px]">
        {Array.from({ length: 12 }, (_, i) => (
          <span key={i} className="size-px bg-[#b9b9b9]" />
        ))}
      </div>
      <Tool
        className="w-[141px] rounded-[2px] border border-[#a8a8a8] bg-[#dcdcdc] pl-[2px]"
        label="Move Camera"
        icon={
          <svg width="16" height="16" viewBox="0 0 16 16">
            <path d="M8 0.5 L10.5 3.3 H9 V7 H12.7 V5.5 L15.5 8 L12.7 10.5 V9 H9 V12.7 H10.5 L8 15.5 L5.5 12.7 H7 V9 H3.3 V10.5 L0.5 8 L3.3 5.5 V7 H7 V3.3 H5.5Z" fill="#fff" stroke="#444" strokeWidth="0.9" />
          </svg>
        }
      />
      <Tool
        className="ml-[3px] w-[103px]"
        label="Interact"
        icon={
          <svg width="17" height="16" viewBox="0 0 17 16">
            <path d="M4.5 9 V1.5 Q5.3 0.2 6.3 1.5 V6 L8.5 5.5 L9 6.5 L11 6 L11.8 7 L14 6.8 L15.3 8 V12 L14 15.3 H5.5 L1 10.5 Q0.5 8.5 2.5 8.8 L4.5 10.5Z" fill="#fff" stroke="#111" strokeWidth="1" />
            <path d="M8.5 6 V9 M11 6.5 V9 M13.3 7 V9" stroke="#111" strokeWidth="0.8" />
          </svg>
        }
      />
      <Tool
        className="w-[91px]"
        label="Select"
        icon={
          <svg width="16" height="14" viewBox="0 0 16 14">
            <rect x="0.6" y="0.6" width="14.5" height="12" fill="#fbf6bd" stroke="#222" strokeDasharray="1.6 1" strokeWidth="1.1" />
            <path d="M16 10 V14 H12Z" fill="#000" />
          </svg>
        }
      />
      <Tool className="w-[168px]" label="2D Pose Estimate" icon={<ArrowIcon color="#1ae83a" dark="#0e8a1e" />} />
      <Tool className="w-[132px]" label="2D Nav Goal" icon={<ArrowIcon color="#ee18d8" dark="#8e0c80" />} />
      <Tool
        className="w-[109px]"
        label="Measure"
        icon={
          <svg width="17" height="8" viewBox="0 0 17 8">
            <rect x="1" y="0.5" width="15.5" height="6.5" fill="#e9e2b4" stroke="#666" />
            <path d="M3 1 V3.5 M5 1 V3.5 M7 1 V3.5 M9 1 V3.5 M11 1 V3.5 M13 1 V3.5" stroke="#777" strokeWidth="0.8" />
          </svg>
        }
      />
      <span className="h-[26px] w-px bg-[#d0d0d0]" />
      <svg width="14" height="14" viewBox="0 0 14 14" className="ml-[15px]">
        <path d="M5 1 H9 V5 H13 V9 H9 V13 H5 V9 H1 V5 H5Z" fill="#8fb6e6" stroke="#2f5f9f" strokeWidth="1.2" />
      </svg>
      <svg width="24" height="24" viewBox="0 0 24 24" className="ml-[26px] mt-[6px]">
        <path d="M1 6.5 H12 V10.5 H1Z" fill="#8fb6e6" stroke="#2f5f9f" strokeWidth="1.2" />
        <path d="M14 17 H23 L18.5 22Z" fill="#444" />
      </svg>
      <svg width="28" height="24" viewBox="0 0 28 24" className="ml-[12px] mt-[6px]">
        <circle cx="9" cy="9" r="7.2" fill="#d6d4d4" />
        <ellipse cx="9" cy="9" rx="6.5" ry="4.8" fill="#f4f4f6" stroke="#aaa" strokeWidth="0.7" />
        <circle cx="9" cy="9" r="3.7" fill="#5f77bd" />
        <circle cx="9" cy="9" r="1.7" fill="#12183a" />
        <path d="M17 17 H26 L21.5 22Z" fill="#444" />
      </svg>
    </div>
  );
}

function SplitHandle() {
  return (
    <div className="flex w-[23px] shrink-0 items-center pl-[4px]">
      <span className="flex flex-col gap-[2px]">
        {[0, 1, 2, 3, 4, 5].map((i) => (
          <span key={i} className="size-px bg-[#999]" />
        ))}
      </span>
      <span className="ml-[8px]"><Caret dir="left" /></span>
    </div>
  );
}

export default function App() {
  return (
    <div className={`flex h-[1440px] w-[2560px] flex-col overflow-hidden bg-[#efefef] text-[17px] leading-[22px] text-black ${FONT}`}>
      <TopBar />
      <div className="flex h-[1406px]">
        <Dock />
        <div className="flex w-[2472px] flex-col">
          <TitleBar />
          <div className="flex h-[26px] items-center gap-[16px] border-b border-[#d4d4d4] pl-[11px] text-[17.5px] tracking-[0.15px]">
            {["File", "Panels", "Help"].map((m) => (
              <span key={m}>
                <span className="underline decoration-2 underline-offset-[3px]">{m[0]}</span>
                {m.slice(1)}
              </span>
            ))}
          </div>
          <ToolBar />
          <div className="flex h-[1266px] pt-px">
            <DisplaysPanel />
            <SplitHandle />
            <View3D />
            <div className="flex w-[16px] items-center rounded-[3px] border border-[#b0b0b0] bg-[#dcdcdc] pl-[3px]">
              <Caret dir="left" />
            </div>
          </div>
          <div className="flex h-[33px] items-center pl-[2px]">
            <Btn className="h-[28px] w-[63px]">Reset</Btn>
            <p className="ml-[6px] flex-1 whitespace-nowrap tracking-[0.28px]">
              <b>Left-Click:</b> Rotate. <b>Middle-Click:</b> Move X/Y. <b>Right-Click:</b>: Zoom. <b>Shift</b>: More options.
            </p>
            <span className="mr-[2px] -mt-[6px]">24 fps</span>
          </div>
        </div>
      </div>
    </div>
  );
}
